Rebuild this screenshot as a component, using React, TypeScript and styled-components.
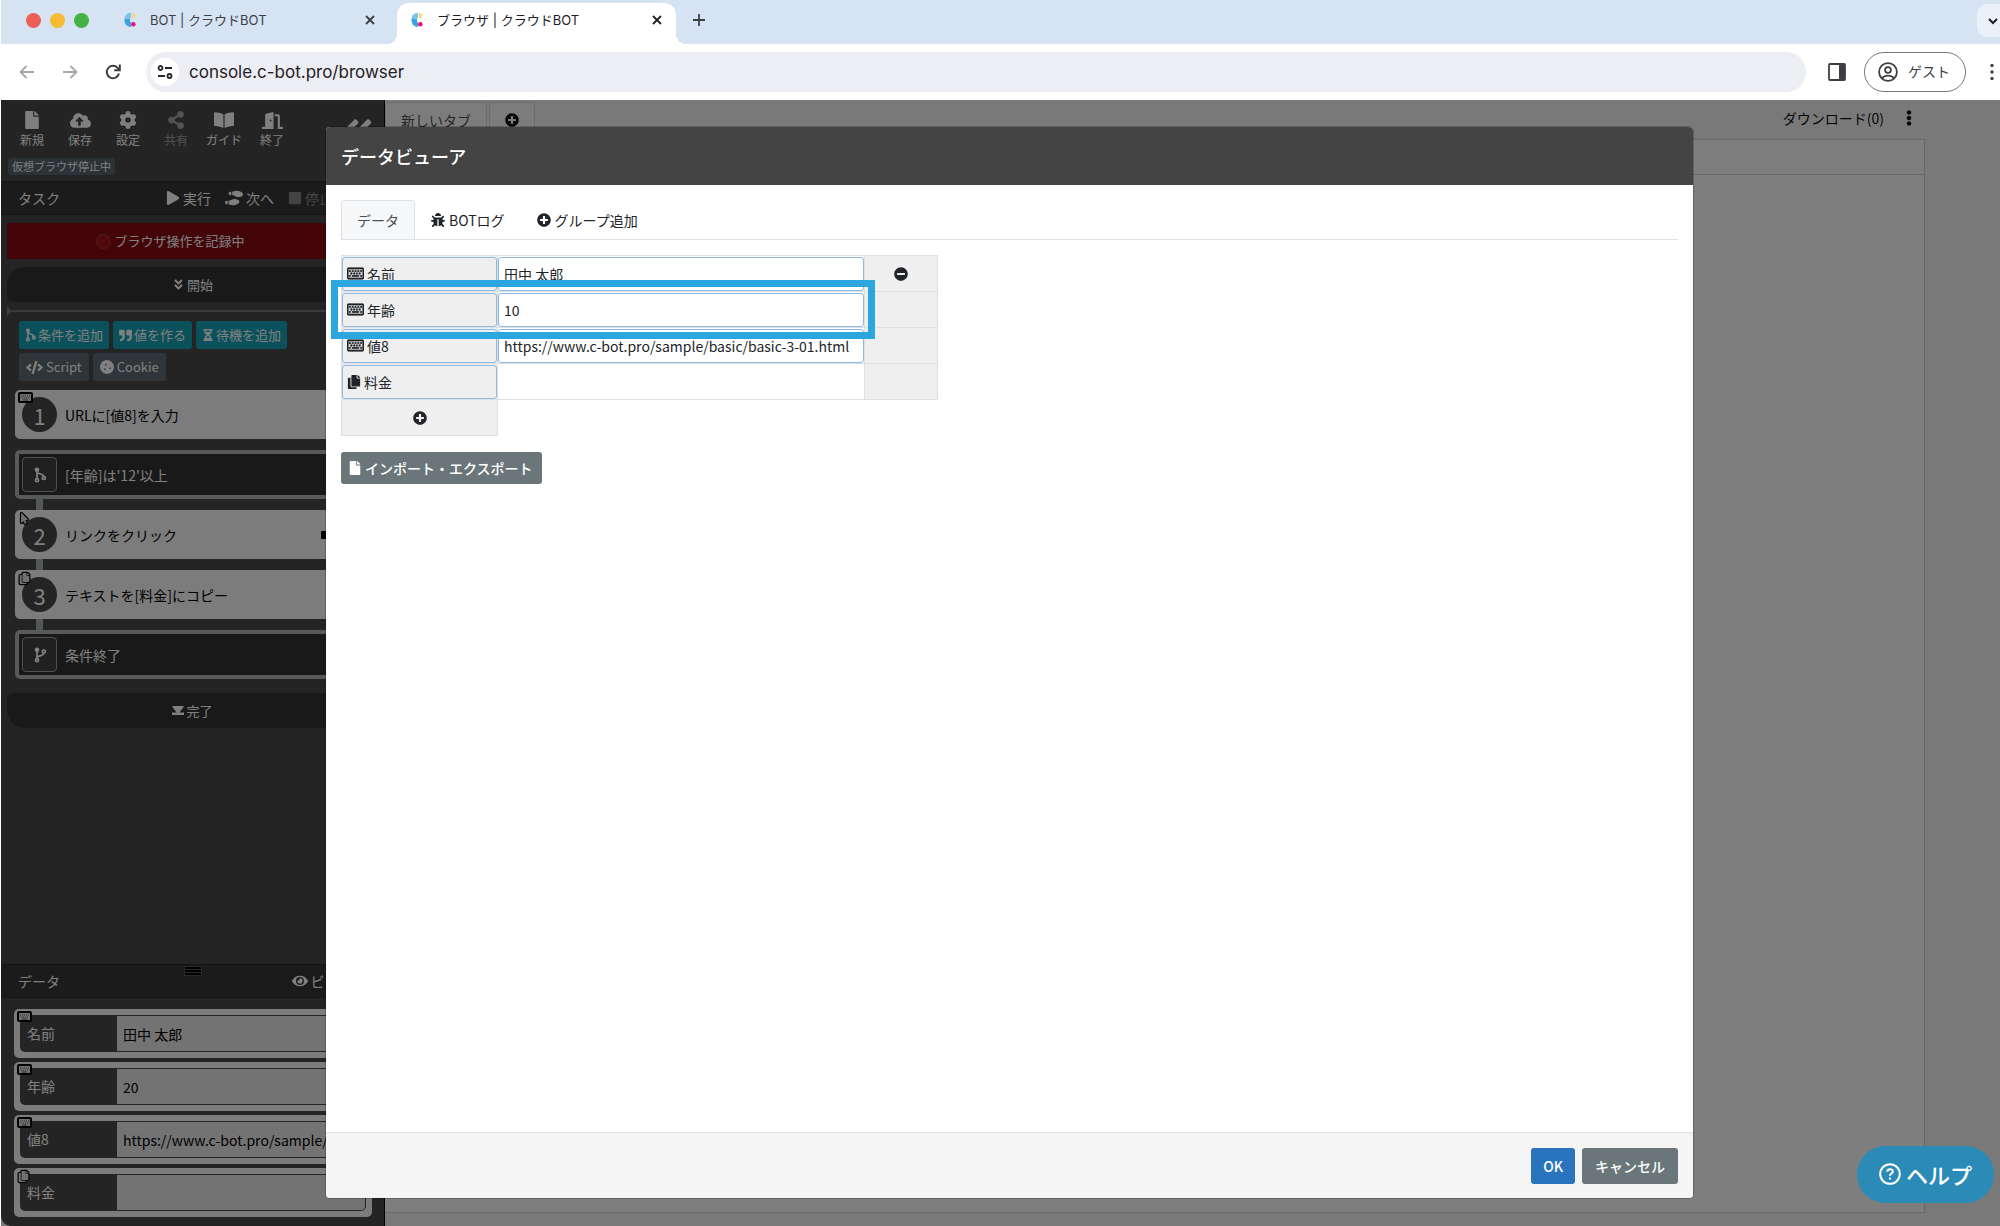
import React from 'react';
import styled, { createGlobalStyle } from 'styled-components';
import {
  FaAngleDoubleDown,
  FaAngleDoubleLeft,
  FaBookOpen,
  FaBug,
  FaCloudUploadAlt,
  FaCode,
  FaCog,
  FaCookie,
  FaCopy,
  FaDoorOpen,
  FaEllipsisV,
  FaEye,
  FaFile,
  FaHourglassHalf,
  FaMinusCircle,
  FaMousePointer,
  FaPlay,
  FaPlusCircle,
  FaQuoteRight,
  FaRegKeyboard,
  FaShareAlt,
  FaShoePrints,
  FaStop,
  FaVideo,
} from 'react-icons/fa';

const GlobalStyle = createGlobalStyle`
  *, *::before, *::after { box-sizing: border-box; }
  body {
    margin: 0;
    font-family: "Noto Sans CJK JP", "Noto Sans", sans-serif;
    font-size: 14px;
    line-height: 20px;
    color: #212529;
    overflow: hidden;
  }
  button, input { font: inherit; color: inherit; }
  button { border: 0; background: none; padding: 0; cursor: pointer; white-space: nowrap; }
  svg { display: block; flex: none; }
`;

const Window = styled.div`
  height: 100vh;
  display: flex;
  flex-direction: column;
  padding-left: 1px;
  background: #fff;
`;

/* ---------- browser chrome ---------- */

const Chrome = styled.header`
  font-family: Inter, "Noto Sans CJK JP", sans-serif;
  color: #1f2023;
  flex: none;
`;

const TabStrip = styled.div`
  height: 44px;
  display: flex;
  background: #d6e3f3;
  padding-left: 25px;
`;

const Lights = styled.div`
  display: flex;
  gap: 9px;
  width: 84px;
  padding-top: 13px;
`;

const Light = styled.span<{ $color: string }>`
  width: 15px;
  height: 15px;
  border-radius: 50%;
  background: ${(p) => p.$color};
`;

const BrowserTab = styled.div<{ $active?: boolean }>`
  position: relative;
  width: 279px;
  height: 41px;
  margin: 3px 8px 0 0;
  padding: 0 14px 7px;
  display: flex;
  align-items: center;
  gap: 14px;
  font-size: 13px;
  border-radius: 12px 12px 0 0;
  background: ${(p) => (p.$active ? '#fff' : 'transparent')};
  color: ${(p) => (p.$active ? '#1f2023' : '#3c4046')};

  &::before, &::after {
    content: '';
    display: ${(p) => (p.$active ? 'block' : 'none')};
    position: absolute;
    bottom: 0;
    width: 10px;
    height: 10px;
  }
  &::before {
    left: -10px;
    background: radial-gradient(circle at 0 0, transparent 10px, #fff 10px);
  }
  &::after {
    right: -10px;
    background: radial-gradient(circle at 100% 0, transparent 10px, #fff 10px);
  }
`;

const TabTitle = styled.span`
  flex: 1;
  white-space: nowrap;
`;

const NewTab = styled.button`
  height: 34px;
  margin: 3px 0 0 8px;
`;

const TabSearch = styled.button`
  width: 32px;
  height: 33px;
  margin: 4px -9px 0 auto;
  padding-left: 10px;
  border-radius: 10px;
  background: #ebf1f9;
`;

const Toolbar = styled.div`
  height: 56px;
  display: flex;
  align-items: center;
  padding: 0 6px 0 17px;
  background: #fff;
`;

const NavButtons = styled.div`
  display: flex;
  gap: 25px;
  margin-right: 24px;
`;

const AddressBar = styled.label`
  flex: 1;
  height: 40px;
  display: flex;
  align-items: center;
  gap: 10px;
  padding-left: 5px;
  border-radius: 20px;
  background: #edeef4;
`;

const SiteInfo = styled.span`
  width: 28px;
  height: 28px;
  display: grid;
  place-items: center;
  border-radius: 50%;
  background: #fff;
`;

const AddressInput = styled.input`
  flex: 1;
  border: 0;
  padding: 0;
  background: none;
  outline: none;
  font-size: 17px;
`;

const PanelButton = styled.button`
  margin: 0 18px 0 22px;
`;

const Guest = styled.button`
  width: 102px;
  height: 40px;
  display: flex;
  align-items: center;
  gap: 10px;
  padding-left: 13px;
  margin-right: 24px;
  border: 1px solid #77787c;
  border-radius: 20px;
  font-size: 14px;
  color: #3c3f43;
`;

/* ---------- page ---------- */

const Page = styled.div`
  position: relative;
  flex: 1;
  min-height: 0;
  display: grid;
  grid-template-columns: 384px 1fr;
  background: #f2f2f2;
`;

const Sidebar = styled.aside`
  display: flex;
  flex-direction: column;
  min-height: 0;
  background: #484848;
  border-right: 1px solid #000;
  border-bottom-left-radius: 10px;
  color: #fff;
`;

const SideHead = styled.div`
  display: grid;
  grid-template-columns: 1fr auto;
  height: 81px;
  padding: 11px 9px 0 7px;
  align-content: start;
`;

const Tools = styled.div`
  display: flex;
`;

const Tool = styled.button<{ $dim?: boolean }>`
  width: 48px;
  height: 38px;
  display: flex;
  flex-direction: column;
  align-items: center;
  gap: 3px;
  font-size: 12px;
  line-height: 16px;
  opacity: ${(p) => (p.$dim ? 0.5 : 1)};
`;

const Collapse = styled.button`
  height: 38px;
`;

const StatusBadge = styled.span`
  justify-self: start;
  margin-top: 9px;
  padding: 0 4px;
  border-radius: 4px;
  background: #56666d;
  font-size: 11px;
  line-height: 17px;
`;

const SectionBar = styled.div`
  position: relative;
  height: 34px;
  display: flex;
  align-items: center;
  padding: 0 4px 0 17px;
  background: #363636;
  border-top: 1px solid #282828;
  border-bottom: 1px solid #282828;
`;

const SectionName = styled.h2`
  flex: 1;
  margin: 0;
  font-size: 14px;
  font-weight: 400;
`;

const SectionAction = styled.button<{ $dim?: boolean }>`
  display: flex;
  align-items: center;
  gap: 3px;
  margin-right: 14px;
  opacity: ${(p) => (p.$dim ? 0.4 : 1)};
`;

const RecordRow = styled.div`
  display: flex;
  gap: 6px;
  padding: 8px 6px 0;
`;

const Record = styled.button`
  flex: 1;
  height: 36px;
  display: flex;
  align-items: center;
  justify-content: center;
  gap: 3px;
  font-size: 13px;
  background: #880a10;
`;

const RecordMenu = styled(Record)`
  flex: none;
  width: 38px;
`;

const RecordDot = styled.span`
  width: 15px;
  height: 15px;
  border-radius: 50%;
  border: 1px solid #8c4348;
  background: #a51218;
`;

const FlowEnd = styled.div<{ $last?: boolean }>`
  display: grid;
  grid-template-columns: 1fr auto 1fr;
  align-items: center;
  height: 35px;
  margin: ${(p) => (p.$last ? '14px' : '8px')} 6px 0;
  padding-right: 36px;
  padding-left: 36px;
  background: #323232;
  border-radius: ${(p) => (p.$last ? '6px 6px 18px 18px' : '18px 18px 6px 6px')};
  font-size: 13px;
`;

const FlowLabel = styled.span`
  grid-column: 2;
  display: flex;
  align-items: center;
  gap: 2px;
`;

const FlowMedia = styled.span`
  justify-self: end;
`;

const InsertLine = styled.div`
  height: 17px;
  margin: 0 6px;
  display: flex;
  align-items: center;

  &::before {
    content: '';
    border: 5px solid transparent;
    border-left-color: #7a7a7a;
    border-right: 0;
  }
  &::after {
    content: '';
    flex: 1;
    height: 2px;
    background: #747474;
  }
`;

const Adders = styled.div`
  display: flex;
  flex-direction: column;
  gap: 4px;
  margin: 0 12px 9px 14px;
  padding: 2px 0 0 4px;
`;

const AdderRow = styled.div`
  display: flex;
  gap: 4px;
`;

const AddButton = styled.button<{ $plain?: boolean }>`
  height: 28px;
  display: flex;
  align-items: center;
  gap: ${(p) => (p.$plain ? '3px' : '2px')};
  padding: 0 ${(p) => (p.$plain ? '7px' : '6px')};
  border-radius: 3px;
  font-size: 13px;
  background: ${(p) => (p.$plain ? '#5f6a70' : '#17a2b8')};
`;

const Steps = styled.ol`
  list-style: none;
  margin: 0;
  padding: 0 12px 0 14px;
  display: flex;
  flex-direction: column;
  gap: 11px;
`;

const Step = styled.li<{ $branch?: boolean; $linked?: boolean }>`
  position: relative;
  height: 49px;
  display: flex;
  align-items: center;
  gap: 8px;
  padding-left: ${(p) => (p.$branch ? '3px' : '7px')};
  padding-right: 39px;
  border: ${(p) => (p.$branch ? '4px solid #b0b2b2' : '0')};
  border-radius: 5px;
  background: ${(p) => (p.$branch ? '#323232' : '#f8f8f8')};
  color: ${(p) => (p.$branch ? '#fff' : '#000')};

  &::before {
    content: '';
    display: ${(p) => (p.$linked ? 'block' : 'none')};
    position: absolute;
    left: ${(p) => (p.$branch ? '17px' : '21px')};
    top: ${(p) => (p.$branch ? '-15px' : '-11px')};
    width: 7px;
    height: 11px;
    background: #a8aeae;
  }
`;

const StepNumber = styled.span`
  width: 35px;
  height: 35px;
  border-radius: 50%;
  background: #484848;
  color: #fff;
  font-size: 22px;
  line-height: 36px;
  text-align: center;
`;

const BranchIcon = styled.span`
  width: 35px;
  height: 35px;
  display: grid;
  place-items: center;
  border: 1px solid #a0a0a0;
  border-radius: 4px;
  background: #404040;
`;

const StepText = styled.span`
  flex: 1;
`;

const Corner = styled.span`
  position: absolute;
  left: 4px;
  top: 3px;
  color: #000;

  svg { overflow: visible; }
`;

const Fill = styled.div`
  flex: 1;
`;

const Grip = styled.span`
  position: absolute;
  left: 184px;
  top: 2px;
  width: 16px;
  height: 8px;
  border: solid #000;
  border-width: 2px 0;
  outline: 1px solid #505050;
  background: linear-gradient(#555 1px, #000 1px, #000 3px, #555 3px);
`;

const DataList = styled.div`
  display: flex;
  flex-direction: column;
  gap: 4px;
  padding: 11px 12px 9px 13px;
`;

const DataCard = styled.div`
  position: relative;
  height: 49px;
  display: flex;
  padding: 6px;
  border-radius: 5px;
  background: #f8f8f8;
`;

const DataName = styled.label`
  width: 97px;
  padding: 0 7px;
  line-height: 36px;
  background: #484848;
  border-radius: 0 0 0 5px;
`;

const DataInput = styled.input`
  flex: 1;
  min-width: 0;
  padding: 0 6px;
  border: 1px solid #484848;
  border-left: 0;
  border-radius: 0 0 5px 0;
  background: #e6e6e6;
  color: #000;
`;

const Main = styled.main`
  display: flex;
  flex-direction: column;
  min-width: 0;
`;

const MainTabs = styled.div`
  height: 39px;
  display: flex;
  align-items: stretch;
  padding: 2px 83px 0 0;
`;

const MainTab = styled.button`
  padding: 0 15px 2px;
  margin-right: 2px;
  border: 1px solid #d8d8d8;
  border-bottom: 0;
  border-radius: 4px 4px 0 0;
  color: #495057;
  background: #f8f8f8;
`;

const Downloads = styled.button`
  display: flex;
  align-items: center;
  gap: 17px;
  margin: 0 0 6px auto;
  color: #111;
`;

const Viewport = styled.div`
  flex: 1;
  margin: 0 75px 13px 0;
  border: 1px solid #cfd3d6;
  border-left: 0;
  background: #fdfdff;
`;

const ViewportBar = styled.div`
  height: 35px;
  border-bottom: 1px solid #cfd3d6;
`;

/* ---------- dialog ---------- */

const Backdrop = styled.div`
  position: absolute;
  inset: 0;
  display: flex;
  padding: 27px 307px 28px 325px;
  background: rgba(0, 0, 0, 0.5);
`;

const Dialog = styled.section`
  flex: 1;
  min-width: 0;
  display: flex;
  flex-direction: column;
  border-radius: 4px;
  background: #fff;
  box-shadow: 0 0 0 1px rgba(0, 0, 0, 0.2);
`;

const DialogHead = styled.h1`
  margin: 0;
  padding: 0 15px;
  border-radius: 4px 4px 0 0;
  background: #444;
  color: #fff;
  font-size: 18px;
  font-weight: 500;
  line-height: 58px;
`;

const DialogBody = styled.div`
  position: relative;
  flex: 1;
  padding: 15px;
`;

const TabList = styled.div`
  display: flex;
  border-bottom: 1px solid #dee2e6;
  margin-bottom: 15px;
`;

const TabButton = styled.button<{ $active?: boolean }>`
  height: 39px;
  display: flex;
  align-items: center;
  gap: 4px;
  padding: 0 15px;
  border: 1px solid ${(p) => (p.$active ? '#dee2e6' : 'transparent')};
  border-bottom: 0;
  border-radius: 4px 4px 0 0;
  background: ${(p) => (p.$active ? '#f6f7f8' : 'transparent')};
  color: ${(p) => (p.$active ? '#495057' : '#212529')};
`;

const DataTable = styled.table`
  width: 597px;
  table-layout: fixed;
  border-collapse: separate;
  border-spacing: 0;
`;

const Cell = styled.td<{ $grey?: boolean; $left?: boolean; $open?: boolean; $top?: boolean }>`
  height: ${(p) => (p.$top ? '37px' : '36px')};
  padding: 1px 0 0;
  background: ${(p) => (p.$grey ? '#efefef' : 'transparent')};
  border: 0 solid #dee0e2;
  border-right-width: ${(p) => (p.$open ? '0' : '1px')};
  border-bottom-width: ${(p) => (p.$open ? '0' : '1px')};
  border-left-width: ${(p) => (p.$left ? '1px' : '0')};
  border-top-width: ${(p) => (p.$top ? '1px' : '0')};
`;

const KeyButton = styled.button`
  width: 100%;
  height: 34px;
  display: flex;
  align-items: center;
  gap: 3px;
  padding: 0 4px 1px;
  border: 1px solid #8db9e2;
  border-radius: 3px;
`;

const ValueInput = styled.input`
  display: block;
  width: 100%;
  height: 34px;
  padding: 0 5px 1px;
  border: 1px solid #8db9e2;
  border-radius: 3px;
  background: #fff;
  outline: none;
`;

const IconButton = styled.button`
  width: 100%;
  height: 34px;
  display: grid;
  place-items: center;
`;

const Highlight = styled.div`
  position: absolute;
  left: 5px;
  top: 95px;
  width: 544px;
  height: 59px;
  border: 7px solid #2ba6df;
  pointer-events: none;
`;

const Button = styled.button<{ $primary?: boolean; $small?: boolean }>`
  height: ${(p) => (p.$small ? '32px' : '36px')};
  display: flex;
  align-items: center;
  gap: 3px;
  padding: 0 ${(p) => (p.$small ? '9px 0 7px' : p.$primary ? '12px' : '13px')};
  border-radius: 3px;
  font-weight: 500;
  color: #fff;
  background: ${(p) => (p.$primary ? '#2a73bd' : '#6a7679')};
`;

const ImportButton = styled(Button)`
  height: 32px;
  margin-top: 16px;
  padding: 0 9px 0 7px;
`;

const DialogFoot = styled.footer`
  display: flex;
  justify-content: flex-end;
  gap: 7px;
  padding: 15px 15px 14px;
  border-top: 1px solid #dfe1e3;
  border-radius: 0 0 4px 4px;
  background: #f5f5f5;
`;

const Help = styled.button`
  position: absolute;
  right: 6px;
  bottom: 23px;
  width: 137px;
  height: 57px;
  display: flex;
  align-items: center;
  justify-content: center;
  gap: 5px;
  padding-bottom: 2px;
  border-radius: 29px;
  background: #2b8bb6;
  color: #fff;
  font-size: 22px;
  font-weight: 500;
`;

/* ---------- drawings ---------- */

const Favicon = () => (
  <svg width="12" height="16" viewBox="0 0 12 16">
    <path d="M7 1v4.500C5.600 6 5.600 10 7 10.500V15C3 15 .5 12 .5 8S3 1 7 1z" fill="#3ba3dc" />
    <path d="M.6 7C1 3.400 3.500 1 7 1v4.500C6.300 5.800 6 6.400 6 7z" fill="#7fc4e8" />
    <path d="M8 1c1.700.2 3 .9 3.700 1.800L10 6.500C9.500 5.900 8.800 5.500 8 5.400z" fill="#f7d97a" />
    <circle cx="9.300" cy="12.300" r="2.300" fill="#e5127d" />
  </svg>
);

const Cross = () => (
  <svg width="10" height="10" viewBox="0 0 10 10" fill="none" stroke="currentColor" strokeWidth="1.800">
    <path d="M1 1l8 8M9 1l-8 8" />
  </svg>
);

const Arrow = ({ flip }: { flip?: boolean }) => (
  <svg width="18" height="18" viewBox="0 0 18 18" fill="none" stroke="#a5a7aa" strokeWidth="1.800">
    <path d={flip ? 'M2 9h13M9.500 3l6 6-6 6' : 'M16 9H3M8.500 3l-6 6 6 6'} />
  </svg>
);

const Reload = () => (
  <svg width="18" height="18" viewBox="0 0 18 18" fill="none" stroke="#3c3f43" strokeWidth="2">
    <path d="M15 10.500A6.200 6.200 0 1 1 13.600 4.800L15.500 7" />
    <path d="M15.800 1.500V7.200H10.200" />
  </svg>
);

const Tune = () => (
  <svg width="16" height="16" viewBox="0 0 16 16" fill="none" stroke="#26282b" strokeWidth="1.800">
    <circle cx="3.500" cy="4" r="2" />
    <path d="M8 4h7M1 12h7" />
    <circle cx="12.500" cy="12" r="2" />
  </svg>
);

const SidePanel = () => (
  <svg width="18" height="18" viewBox="0 0 18 18">
    <rect x="1" y="1" width="16" height="16" rx="1" fill="none" stroke="#3c3f43" strokeWidth="1.800" />
    <path d="M11 1h6v16h-6z" fill="#3c3f43" />
  </svg>
);

const Person = () => (
  <svg width="20" height="20" viewBox="0 0 20 20" fill="none" stroke="#3c3f43" strokeWidth="1.800">
    <circle cx="10" cy="10" r="8.900" />
    <circle cx="10" cy="8" r="2.900" />
    <path d="M4 16.300c1.600-1.900 3.600-2.600 6-2.600s4.400.7 6 2.600" />
  </svg>
);

const Dots = () => (
  <svg width="4" height="18" viewBox="0 0 4 18" fill="#3c3f43">
    <circle cx="2" cy="2.500" r="1.700" />
    <circle cx="2" cy="9" r="1.700" />
    <circle cx="2" cy="15.500" r="1.700" />
  </svg>
);

const GitFork = ({ end, size = 16 }: { end?: boolean; size?: number }) => (
  <svg width={Math.round(size * 0.75)} height={size} viewBox="0 0 12 16" fill="none" stroke="currentColor" strokeWidth="1.700">
    <circle cx="3" cy="2.800" r="1.500" fill="currentColor" />
    <circle cx="3" cy="13.200" r="1.500" />
    <circle cx="9.800" cy={end ? 4.500 : 11} r="1.500" />
    <path d={end ? 'M3 4.500v7M9.800 6c0 3-4.500 2-6.800 4.500' : 'M3 4.500v7M3 4.500c.5 3.500 6.500 1.500 6.800 5'} />
  </svg>
);

const Finish = () => (
  <svg width="12" height="9" viewBox="0 0 12 9" fill="currentColor">
    <path d="M.5 0h11v1.200L7.300 6.500H12V9H0V6.500h4.700L.5 1.200z" />
  </svg>
);

const Question = () => (
  <svg width="22" height="22" viewBox="0 0 22 22" fill="none" stroke="currentColor" strokeWidth="2">
    <circle cx="11" cy="11" r="9.800" />
    <path d="M8.300 8.800c0-3.600 5.500-3.400 5.500-.3 0 2-2.800 2.200-2.800 4.300" />
    <path d="M11 14.400v2" />
  </svg>
);

const KeyboardMark = () => (
  <svg width="13" height="9" viewBox="0 0 13 9">
    <rect x="0" y="0" width="13" height="9" rx="1" fill="#e4e4e4" stroke="#000" strokeWidth="2" />
    <path d="M2 3h9M3 5h8" stroke="#555" strokeDasharray="1 1" />
    <path d="M4 7h5" stroke="#555" />
  </svg>
);

const outlined = {
  fill: '#e0e0e0',
  stroke: '#000',
  strokeWidth: 110,
  strokeLinejoin: 'round' as const,
  paintOrder: 'stroke',
};

/* ---------- content ---------- */

const tools = [
  { label: '新規', Icon: FaFile },
  { label: '保存', Icon: FaCloudUploadAlt, size: 21 },
  { label: '設定', Icon: FaCog },
  { label: '共有', Icon: FaShareAlt, dim: true },
  { label: 'ガイド', Icon: FaBookOpen, size: 20 },
  { label: '終了', Icon: FaDoorOpen, size: 21 },
];

const ToolIcon = styled.span`
  height: 18px;
  display: grid;
  align-content: center;
`;

const sideData = [
  { name: '名前', value: '田中 太郎' },
  { name: '年齢', value: '20' },
  { name: '値8', value: 'https://www.c-bot.pro/sample/basic/basic-3-01.html' },
  { name: '料金', value: '', copy: true },
];

const tableData = [
  { name: '名前', value: '田中 太郎' },
  { name: '年齢', value: '10' },
  { name: '値8', value: 'https://www.c-bot.pro/sample/basic/basic-3-01.html' },
];

function BrowserChrome() {
  return (
    <Chrome>
      <TabStrip>
        <Lights>
          <Light $color="#ec5f57" />
          <Light $color="#f5bb32" />
          <Light $color="#43b244" />
        </Lights>
        <BrowserTab>
          <Favicon />
          <TabTitle>BOT | クラウドBOT</TabTitle>
          <button aria-label="閉じる"><Cross /></button>
        </BrowserTab>
        <BrowserTab $active>
          <Favicon />
          <TabTitle>ブラウザ | クラウドBOT</TabTitle>
          <button aria-label="閉じる"><Cross /></button>
        </BrowserTab>
        <NewTab aria-label="新規タブ">
          <svg width="14" height="14" viewBox="0 0 14 14" stroke="#3c3f43" strokeWidth="1.800">
            <path d="M7 1v12M1 7h12" />
          </svg>
        </NewTab>
        <TabSearch aria-label="タブを検索">
          <svg width="12" height="12" viewBox="0 0 12 12" fill="none" stroke="#1f2023" strokeWidth="2">
            <path d="M2 4l4 4 4-4" />
          </svg>
        </TabSearch>
      </TabStrip>
      <Toolbar>
        <NavButtons>
          <button aria-label="戻る"><Arrow /></button>
          <button aria-label="進む"><Arrow flip /></button>
          <button aria-label="再読み込み"><Reload /></button>
        </NavButtons>
        <AddressBar>
          <SiteInfo><Tune /></SiteInfo>
          <AddressInput aria-label="アドレス" defaultValue="console.c-bot.pro/browser" />
        </AddressBar>
        <PanelButton aria-label="サイドパネル"><SidePanel /></PanelButton>
        <Guest><Person />ゲスト</Guest>
        <button aria-label="メニュー"><Dots /></button>
      </Toolbar>
    </Chrome>
  );
}

function TaskPanel() {
  return (
    <>
      <SectionBar>
        <SectionName>タスク</SectionName>
        <SectionAction><FaPlay size={14} />実行</SectionAction>
        <SectionAction><FaShoePrints size={18} />次へ</SectionAction>
        <SectionAction $dim><FaStop size={14} />停止</SectionAction>
        <SectionAction aria-label="その他"><FaEllipsisV size={19} /></SectionAction>
      </SectionBar>
      <RecordRow>
        <Record><RecordDot />ブラウザ操作を記録中</Record>
        <RecordMenu aria-label="記録メニュー"><FaStop size={12} /></RecordMenu>
      </RecordRow>
      <FlowEnd><FlowLabel><FaAngleDoubleDown size={13} />開始</FlowLabel></FlowEnd>
      <InsertLine />
      <Adders>
        <AdderRow>
          <AddButton><GitFork size={14} />条件を追加</AddButton>
          <AddButton><FaQuoteRight size={13} />値を作る</AddButton>
          <AddButton><FaHourglassHalf size={12} />待機を追加</AddButton>
        </AdderRow>
        <AdderRow>
          <AddButton $plain><FaCode size={17} />Script</AddButton>
          <AddButton $plain><FaCookie size={14} />Cookie</AddButton>
        </AdderRow>
      </Adders>
      <Steps>
        <Step>
          <StepNumber>1</StepNumber>
          <StepText>URLに[値8]を入力</StepText>
          <Corner><KeyboardMark /></Corner>
        </Step>
        <Step $branch>
          <BranchIcon><GitFork /></BranchIcon>
          <StepText>[年齢]は'12'以上</StepText>
        </Step>
        <Step $linked>
          <StepNumber>2</StepNumber>
          <StepText>リンクをクリック</StepText>
          <FaVideo size={12} />
          <Corner><FaMousePointer size={11} {...outlined} /></Corner>
        </Step>
        <Step $linked>
          <StepNumber>3</StepNumber>
          <StepText>テキストを[料金]にコピー</StepText>
          <Corner><FaCopy size={11} {...outlined} /></Corner>
        </Step>
        <Step $branch $linked>
          <BranchIcon><GitFork end /></BranchIcon>
          <StepText>条件終了</StepText>
        </Step>
      </Steps>
      <FlowEnd $last>
        <FlowLabel><Finish />完了</FlowLabel>
        <FlowMedia><FaVideo size={12} /></FlowMedia>
      </FlowEnd>
    </>
  );
}

function DataPanel() {
  return (
    <>
      <SectionBar>
        <SectionName>データ</SectionName>
        <Grip />
        <SectionAction><FaEye size={16} />ビューア</SectionAction>
      </SectionBar>
      <DataList>
        {sideData.map((d, i) => (
          <DataCard key={d.name}>
            <DataName htmlFor={`side-${i}`}>{d.name}</DataName>
            <DataInput id={`side-${i}`} defaultValue={d.value} />
            <Corner>{d.copy ? <FaCopy size={11} {...outlined} /> : <KeyboardMark />}</Corner>
          </DataCard>
        ))}
      </DataList>
    </>
  );
}

function DataViewer() {
  return (
    <Dialog role="dialog" aria-labelledby="viewer-title">
      <DialogHead id="viewer-title">データビューア</DialogHead>
      <DialogBody>
        <TabList role="tablist">
          <TabButton role="tab" $active>データ</TabButton>
          <TabButton role="tab"><FaBug size={14} />BOTログ</TabButton>
          <TabButton role="tab"><FaPlusCircle size={14} />グループ追加</TabButton>
        </TabList>
        <DataTable>
          <colgroup>
            <col width="157" />
            <col width="367" />
            <col width="73" />
          </colgroup>
          <tbody>
            {tableData.map((d, i) => (
              <tr key={d.name}>
                <Cell $grey $left $top={i === 0}>
                  <KeyButton>
                    <FaRegKeyboard size={17} stroke="currentColor" strokeWidth={24} />
                    {d.name}
                  </KeyButton>
                </Cell>
                <Cell $top={i === 0}>
                  <ValueInput aria-label={d.name} defaultValue={d.value} />
                </Cell>
                <Cell $grey $top={i === 0}>
                  {i === 0 && <IconButton aria-label="列を削除"><FaMinusCircle size={14} /></IconButton>}
                </Cell>
              </tr>
            ))}
            <tr>
              <Cell $grey $left><KeyButton><FaCopy size={14} />料金</KeyButton></Cell>
              <Cell />
              <Cell $grey />
            </tr>
            <tr>
              <Cell $grey $left>
                <IconButton aria-label="行を追加"><FaPlusCircle size={14} /></IconButton>
              </Cell>
              <Cell $open />
              <Cell $open />
            </tr>
          </tbody>
        </DataTable>
        <ImportButton><FaFile size={14} />インポート・エクスポート</ImportButton>
        <Highlight />
      </DialogBody>
      <DialogFoot>
        <Button $primary>OK</Button>
        <Button>キャンセル</Button>
      </DialogFoot>
    </Dialog>
  );
}

export default function App() {
  return (
    <Window>
      <GlobalStyle />
      <BrowserChrome />
      <Page>
        <Sidebar>
          <SideHead>
            <Tools>
              {tools.map(({ label, Icon, dim, size }) => (
                <Tool key={label} $dim={dim}>
                  <ToolIcon><Icon size={size ?? 18} /></ToolIcon>
                  {label}
                </Tool>
              ))}
            </Tools>
            <Collapse aria-label="折りたたむ"><FaAngleDoubleLeft size={34} /></Collapse>
            <StatusBadge>仮想ブラウザ停止中</StatusBadge>
          </SideHead>
          <TaskPanel />
          <Fill />
          <DataPanel />
        </Sidebar>
        <Main>
          <MainTabs>
            <MainTab>新しいタブ</MainTab>
            <MainTab aria-label="タブを追加"><FaPlusCircle size={14} color="#111" /></MainTab>
            <Downloads>ダウンロード(0)<FaEllipsisV size={16} /></Downloads>
          </MainTabs>
          <Viewport><ViewportBar /></Viewport>
        </Main>
        <Backdrop><DataViewer /></Backdrop>
        <Help><Question />ヘルプ</Help>
      </Page>
    </Window>
  );
}
